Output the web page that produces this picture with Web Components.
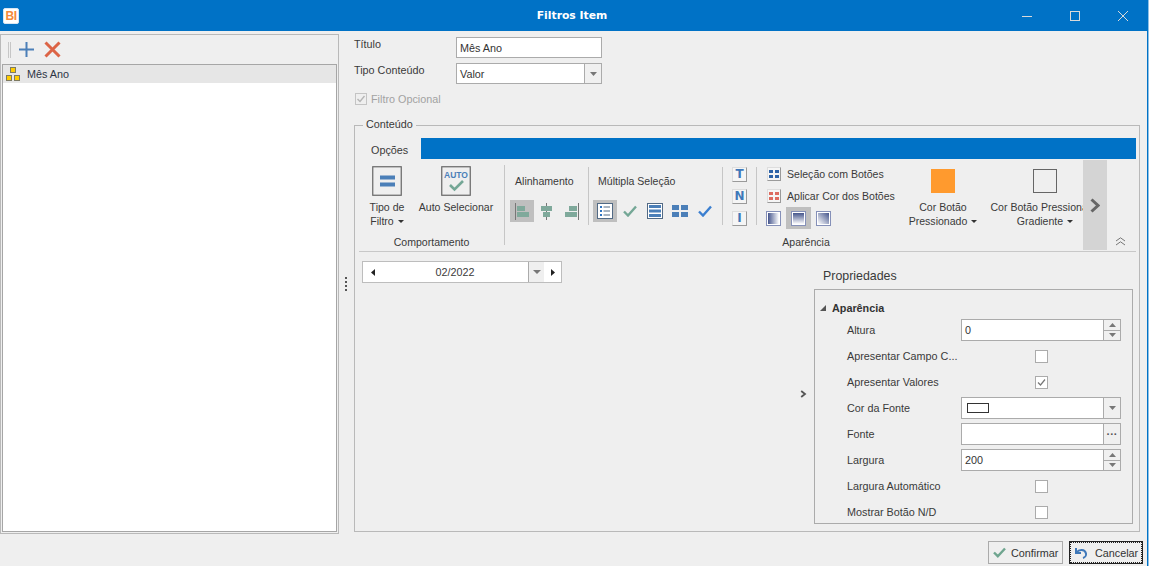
<!DOCTYPE html>
<html lang="pt">
<head>
<meta charset="utf-8">
<title>Filtros Item</title>
<style>
  html, body { margin: 0; height: 100%; overflow: hidden; }
  body { font: 10.8px/14px "Liberation Sans", sans-serif; color: #3a3a3a; background: #efefef; }
</style>
</head>
<body>
<filter-window>
  <title-bar slot="top" caption="Filtros Item"></title-bar>
  <item-list slot="left">
    <list-row>Mês Ano</list-row>
  </item-list>
  <div slot="right">
    <form-row label="Título"><text-box value="Mês Ano" h="21"></text-box></form-row>
    <form-row label="Tipo Conteúdo"><text-box value="Valor" btn="drop" h="21"></text-box></form-row>
    <opt-check label="Filtro Opcional"></opt-check>
  </div>
  <group-box slot="group" legend="Conteúdo">
    <ribbon-tabs tab="Opções"></ribbon-tabs>
    <ribbon-bar></ribbon-bar>
    <editor-area></editor-area>
  </group-box>
  <dlg-button slot="footer" kind="ok">Confirmar</dlg-button>
  <dlg-button slot="footer" kind="cancel" focused>Cancelar</dlg-button>
</filter-window>

<script>
class Base extends HTMLElement {
  connectedCallback() {
    if (this.shadowRoot) return;
    this.attachShadow({ mode: 'open' }).innerHTML = `<style>${this.css()}</style>${this.html()}`;
  }
  css() { return ':host{display:block}'; }
  html() { return '<slot></slot>'; }
  attr(name, d = '') { return this.hasAttribute(name) ? this.getAttribute(name) : d; }
}

class FilterWindow extends Base {
  css() { return `
    :host { display: flex; flex-direction: column; width: 1149px; height: 566px; box-sizing: border-box;
      border-right: 1px solid #8fc1e6; position: relative; }
    .inner { flex: 1; display: flex; flex-direction: column; border-right: 1px solid #0072c6; min-height: 0; }
    .main { flex: 1; display: flex; min-height: 0; padding-top: 3px; }
    .left { width: 339px; flex: none; display: flex; }
    .splitter { width: 15px; flex: none; display: flex; align-items: flex-start; justify-content: center; }
    .dots { margin: 243px 0 0 -2px; width: 2px; height: 14px;
      background: repeating-linear-gradient(#555 0 2px, transparent 2px 4px); }
    .right { flex: 1; display: flex; flex-direction: column; padding: 3px 7px 3px 0; min-width: 0; }
    .foot { height: 31px; flex: none; box-sizing: border-box; padding: 6px 4px 0 0; display: flex; justify-content: flex-end; gap: 6px; }
    ::slotted(group-box) { flex: 1; min-height: 0; }
  `; }
  html() { return `
    <slot name="top"></slot>
    <div class="inner">
      <div class="main">
        <div class="left"><slot name="left"></slot></div>
        <div class="splitter"><div class="dots"></div></div>
        <div class="right"><slot name="right"></slot><slot name="group"></slot></div>
      </div>
      <div class="foot"><slot name="footer"></slot></div>
    </div>`; }
}

class TitleBar extends Base {
  css() { return `
    :host { display: flex; align-items: center; height: 31px; flex: none; background: #0072c6; color: #fff; }
    .logo { width: 16px; height: 16px; margin-left: 3px; background: #fff; border-radius: 2px; box-sizing: border-box;
      border: 1px solid #d8e6f2; color: #f58a3c; font: bold 12px/14px "Liberation Sans", sans-serif; text-align: center; letter-spacing: -.5px; }
    .cap { flex: 1; text-align: center; font: bold 10.8px/14px "DejaVu Sans", sans-serif; padding-left: 122px; }
    .ctl { display: flex; margin-right: 1px; }
    .ctl div { width: 48px; height: 31px; display: flex; align-items: center; justify-content: center; }
    svg { display: block; }
  `; }
  html() { return `
    <div class="logo">BI</div>
    <div class="cap">${this.attr('caption')}</div>
    <div class="ctl">
      <div><svg width="10" height="10"><path d="M0 5.5H10" stroke="#d9d9d9"/></svg></div>
      <div><svg width="10" height="10"><rect x=".5" y=".5" width="9" height="9" fill="none" stroke="#d9d9d9"/></svg></div>
      <div><svg width="10" height="10"><path d="M0 0L10 10M10 0L0 10" stroke="#d9d9d9"/></svg></div>
    </div>`; }
}

class ItemList extends Base {
  css() { return `
    :host { flex: 1; display: flex; flex-direction: column; border: 1px solid #b9b9b9; box-sizing: border-box; margin-bottom: 1px; }
    .tools { height: 29px; flex: none; display: flex; align-items: center; padding-left: 7px; }
    .grip { width: 3px; height: 16px; border-left: 1px solid #c6c6c6; border-right: 1px solid #c6c6c6; box-sizing: border-box; margin-right: 8px; }
    .list { flex: 1; margin: 0 1px 1px 1px; background: #fff; border: 1px solid #a6a6a6; }
    svg { display: block; }
  `; }
  html() { return `
    <div class="tools">
      <div class="grip"></div>
      <svg width="15" height="15" style="margin-right:10px"><path d="M7.5 0V15M0 7.5H15" stroke="#4b7fb8" stroke-width="2"/></svg>
      <svg width="17" height="17"><path d="M1.5 1.5L15.5 15.5M15.5 1.5L1.5 15.5" stroke="#dc6446" stroke-width="3"/></svg>
    </div>
    <div class="list"><slot></slot></div>`; }
}

class ListRow extends Base {
  css() { return `
    :host { display: flex; align-items: center; height: 18px; background: #e6e6e6; color: #2c3444; }
    svg { display: block; margin: 0 6px 0 3px; }
  `; }
  html() { return `
    <svg width="15" height="15" viewBox="0 0 15 15">
      <g fill="#ffcc00" stroke="#7d7a62"><rect x="4.5" y=".5" width="5" height="5"/><rect x=".5" y="8.5" width="5" height="5"/><rect x="8.5" y="8.5" width="5" height="5"/></g>
    </svg><slot></slot>`; }
}

class FormRow extends Base {
  css() { return `
    :host { display: grid; grid-template-columns: 102px 146px; margin-bottom: 5px; }
  `; }
  html() { return `<div>${this.attr('label')}</div><slot></slot>`; }
}

class TextBox extends Base {
  css() { return `
    :host { display: flex; box-sizing: border-box; height: ${this.attr('h', '22')}px; border: 1px solid #ababab; background: #fff; color: #333; }
    .val { flex: 1; padding-left: 3px; display: flex; align-items: center; min-width: 0; }
    .b { flex: none; width: 16px; border-left: 1px solid #ababab; display: flex; flex-direction: column; align-items: center; justify-content: center; background: #f0f0f0; }
    .b i { flex: 1; align-self: stretch; display: flex; align-items: center; justify-content: center; }
    .b i + i { border-top: 1px solid #ababab; }
    .dots { font: bold 11px/8px "Liberation Sans", sans-serif; color: #555; }
    svg { display: block; }
    .swatch { width: 20px; height: 8px; border: 1px solid #333; background: #fff; margin-left: 2px; }
  `; }
  html() {
    const down = '<svg width="7" height="4"><path d="M0 0H7L3.5 4Z" fill="#777"/></svg>';
    const up = '<svg width="7" height="4"><path d="M0 4H7L3.5 0Z" fill="#777"/></svg>';
    const btn = {
      drop: `<div class="b">${down}</div>`,
      spin: `<div class="b"><i>${up}</i><i>${down}</i></div>`,
      more: `<div class="b"><span class="dots">···</span></div>`
    }[this.attr('btn')] || '';
    const val = this.hasAttribute('swatch') ? '<div class="swatch"></div>' : this.attr('value');
    return `<div class="val">${val}</div>${btn}`;
  }
}

class OptCheck extends Base {
  css() { return `
    :host { display: flex; align-items: center; height: 14px; margin: 8px 0 12px 1px; color: #a2a2a2; }
    svg { display: block; margin-right: 4px; }
  `; }
  html() { return `
    <svg width="12" height="12"><rect x=".5" y=".5" width="11" height="11" fill="#efefef" stroke="#c4c4c4"/><path d="M2.5 6L5 8.5L9.5 3" fill="none" stroke="#b5b5b5" stroke-width="1.4"/></svg>
    ${this.attr('label')}`; }
}

class GroupBox extends Base {
  css() { return `
    :host { display: flex; }
    fieldset { flex: 1; display: flex; flex-direction: column; margin: 0; min-width: 0; box-sizing: border-box;
      border: 1px solid #b9b9b9; padding: 6px 3px 0 4px; }
    legend { margin-left: 4px; padding: 0 3px; line-height: 14px; position: relative; top: -1px; }
  `; }
  html() { return `<fieldset><legend>${this.attr('legend')}</legend><slot></slot></fieldset>`; }
}

class RibbonTabs extends Base {
  css() { return `
    :host { display: flex; height: 21px; flex: none; }
    .t { width: 62px; box-sizing: border-box; padding: 5px 0 0 12px; }
    .fill { flex: 1; background: #0072c6; }
  `; }
  html() { return `<div class="t">${this.attr('tab')}</div><div class="fill"></div>`; }
}

class RibbonGroup extends Base {
  css() { return `
    :host { display: flex; flex-direction: column; flex: none; width: ${this.attr('w')}px; box-sizing: border-box; position: relative; }
    .body { height: 75px; display: flex; align-items: flex-start; }
    .lab { text-align: center; line-height: 14px; }
  `; }
  html() { return `<div class="body"><slot></slot></div><div class="lab">${this.attr('label')}</div>`; }
}

class LargeButton extends Base {
  css() { return `
    :host { display: flex; flex-direction: column; align-items: center; flex: none; width: ${this.attr('w')}px; margin: 6px 0 0 ${this.attr('ml', '0')}px; text-align: center; white-space: nowrap; }
    .ic { height: 30px; display: flex; align-items: center; justify-content: center; margin-bottom: 4px; }
    .caret { display: inline-block; width: 0; height: 0; border: 3px solid transparent; border-top: 3px solid #333; border-bottom: 0; margin: 0 0 2px 4px; }
  `; }
  html() {
    const lines = this.attr('text').split('|');
    const caret = this.hasAttribute('caret') ? '<span class="caret"></span>' : '';
    return `<div class="ic"><slot></slot></div><div>${lines.join('<br>')}${caret}</div>`;
  }
}

class IconCell extends Base {
  css() { return `
    :host { display: flex; align-items: center; justify-content: center; flex: none; width: ${this.attr('w', '24')}px; height: 22px; ${this.hasAttribute('on') ? 'background:#bfbfbf;' : ''} }
    ::slotted(svg) { display: block; }
  `; }
}

class FlatKey extends Base {
  css() { return `
    :host { display: flex; align-items: center; justify-content: center; width: 15px; height: 15px; box-sizing: border-box;
      background: #f5f5f5; border-right: 1px solid #9a9a9a; border-bottom: 1px solid #9a9a9a; border-top: 1px solid #ddd; border-left: 1px solid #ddd;
      font: bold 12px/13px "DejaVu Sans", sans-serif; color: #3f78b9; }
    ::slotted(svg) { display: block; }
  `; }
}

class RibbonBar extends Base {
  css() { return `
    :host { display: flex; height: 93px; flex: none; box-sizing: border-box; padding-top: 1px; border-bottom: 1px solid #c8c8c8; font-size: 10.55px; }
    .clip { width: 724px; flex: none; overflow: hidden; display: flex; }
    .sep { flex: none; width: 1px; background: #c6c6c6; height: 58px; margin-top: 7px; }
    .tall { height: 80px; margin-top: 5px; }
    .sec { flex: none; padding-left: 5px; }
    .ttl { padding: 14px 0 0 5px; height: 14px; box-sizing: content-box; margin-bottom: 12px; }
    .icons { display: flex; }
    .scroll { width: 24px; flex: none; height: 90px; background: #d4d4d4; display: flex; align-items: center; justify-content: center; }
    .coll { flex: 1; display: flex; align-items: flex-end; justify-content: flex-end; padding: 0 10px 5px 0; }
    .keys { flex: none; display: flex; flex-direction: column; gap: 7px; padding: 7px 9px 0 9px; }
    .col { flex: none; width: 147px; box-sizing: border-box; padding: 3px 0 0 5px; white-space: nowrap; }
    .line { display: flex; align-items: center; height: 22px; padding-left: 5px; }
    .line flat-key { width: 14px; height: 14px; margin-right: 6px; }
    .grads { display: flex; margin-left: -1px; }
    svg { display: block; }
    .sw { width: 24px; height: 24px; box-sizing: border-box; }
  `; }
  html() {
    const grad = (id, a, b, c, d) => `<svg width="15" height="15"><defs><linearGradient id="${id}" x1="${a}" y1="${b}" x2="${c}" y2="${d}"><stop offset="0" stop-color="#45558c"/><stop offset="1" stop-color="#fff"/></linearGradient></defs><rect x=".5" y=".5" width="14" height="14" fill="#fff" stroke="#8590b8"/><rect x="2" y="2" width="11" height="11" fill="url(#${id})"/></svg>`;
    return `
    <div class="clip">
      <ribbon-group w="145" label="Comportamento">
        <large-button w="38" ml="9" text="Tipo de|Filtro" caret>
          <svg width="30" height="30"><rect x=".75" y=".75" width="28.5" height="28.5" fill="none" stroke="#666" stroke-width="1.2"/><path d="M8 11.5H23M8 18.5H23" stroke="#4b7fb8" stroke-width="4"/></svg>
        </large-button>
        <large-button w="78" ml="11" text="Auto Selecionar">
          <svg width="30" height="30"><rect x=".75" y=".75" width="28.5" height="28.5" fill="none" stroke="#666" stroke-width="1.2"/><text x="15" y="11.5" text-anchor="middle" font-family="Liberation Sans" font-weight="bold" font-size="8.5" fill="#4b7fb8">AUTO</text><path d="M9 19L13.5 23.5L22 15" fill="none" stroke="#74a796" stroke-width="2.6"/></svg>
        </large-button>
      </ribbon-group>
      <ribbon-group w="604" label="Aparência">
        <div class="sep tall" style="margin-right:0"></div>
        <div class="sec" style="width:78px">
          <div class="ttl">Alinhamento</div>
          <div class="icons">
            <icon-cell on><svg width="24" height="22"><path d="M5.5 3V20" stroke="#777"/><path d="M7 6H15V11H7ZM7 12H19V17H7Z" fill="#7fa99b"/></svg></icon-cell>
            <icon-cell><svg width="24" height="22"><path d="M12.5 3V20" stroke="#777"/><path d="M7 6H18V11H7ZM9 12H16V17H9Z" fill="#7fa99b"/></svg></icon-cell>
            <icon-cell><svg width="24" height="22"><path d="M20.5 3V20" stroke="#777"/><path d="M11 6H19V11H11ZM7 12H19V17H7Z" fill="#7fa99b"/></svg></icon-cell>
          </div>
        </div>
        <div class="sep"></div>
        <div class="sec" style="width:129px;padding-left:4px">
          <div class="ttl">Múltipla Seleção</div>
          <div class="icons">
            <icon-cell on><svg width="16" height="16"><rect x=".5" y=".5" width="15" height="15" fill="#fff" stroke="#526a85"/><path d="M3 4H5M3 8H5M3 12H5" stroke="#2f74c0" stroke-width="2"/><path d="M6.5 4H13M6.5 8H13M6.5 12H13" stroke="#526a85"/></svg></icon-cell>
            <icon-cell w="25"><svg width="14" height="12"><path d="M1 6.5L5 10.5L13 1.5" fill="none" stroke="#74a796" stroke-width="2.4"/></svg></icon-cell>
            <icon-cell w="25"><svg width="16" height="16"><rect x=".5" y=".5" width="15" height="15" fill="#fff" stroke="#526a85"/><path d="M2 2H14V5H2ZM2 6.5H14V9.5H2ZM2 11H14V14H2Z" fill="#4b7fb8"/></svg></icon-cell>
            <icon-cell w="25"><svg width="16" height="12"><path d="M0 0H7V5H0ZM9 0H16V5H9ZM0 7H7V12H0ZM9 7H16V12H9Z" fill="#4b7fb8"/></svg></icon-cell>
            <icon-cell w="25"><svg width="14" height="12"><path d="M1 6.5L5 10.5L13 1.5" fill="none" stroke="#3b7fd0" stroke-width="2.4"/></svg></icon-cell>
          </div>
        </div>
        <div class="sep"></div>
        <div class="keys">
          <flat-key>T</flat-key>
          <flat-key>N</flat-key>
          <flat-key>I</flat-key>
        </div>
        <div class="sep"></div>
        <div class="col">
          <div class="line"><flat-key><svg width="10" height="8"><path d="M0 0H4V3H0ZM6 0H10V3H6ZM0 5H4V8H0ZM6 5H10V8H6Z" fill="#2f64a8"/></svg></flat-key>Seleção com Botões</div>
          <div class="line"><flat-key><svg width="10" height="8"><path d="M0 0H4V3H0ZM6 0H10V3H6ZM0 5H4V8H0ZM6 5H10V8H6Z" fill="#dd6b60"/></svg></flat-key>Aplicar Cor dos Botões</div>
          <div class="grads">
            <icon-cell w="25">${grad('g1', 0, 0, 1, 0)}</icon-cell>
            <icon-cell w="25" on>${grad('g2', 0, 0, 0, 1)}</icon-cell>
            <icon-cell w="25">${grad('g3', 1, 0, 0, 1)}</icon-cell>
          </div>
        </div>
        <large-button w="78" text="Cor Botão|Pressionado" caret>
          <div class="sw" style="background:#ff9a2e"></div>
        </large-button>
        <large-button w="110" ml="8" text="Cor Botão Pressionado|Gradiente" caret>
          <div class="sw" style="border:1px solid #666"></div>
        </large-button>
      </ribbon-group>
    </div>
    <div class="scroll"><svg width="10" height="15"><path d="M1.5 1.5L8 7.5L1.5 13.5" fill="none" stroke="#666" stroke-width="3"/></svg></div>
    <div class="coll"><svg width="11" height="9"><path d="M1 4L5.5 .8L10 4M1 8L5.5 4.8L10 8" fill="none" stroke="#777"/></svg></div>`;
  }
}

class DateNav extends Base {
  css() { return `
    :host { display: flex; width: 200px; height: 22px; box-sizing: border-box; border: 1px solid #bdbdbd; background: #fff; flex: none; }
    .l { width: 19px; display: flex; align-items: center; justify-content: center; }
    .v { flex: 1; text-align: center; line-height: 20px; border-right: 1px solid #ababab; }
    .d { width: 15px; background: #efefef; display: flex; align-items: center; justify-content: center; }
    .r { width: 17px; display: flex; align-items: center; justify-content: center; }
    svg { display: block; }
  `; }
  html() { return `
    <div class="l"><svg width="4" height="7"><path d="M4 0V7L0 3.5Z" fill="#222"/></svg></div>
    <div class="v">${this.attr('value')}</div>
    <div class="d"><svg width="8" height="4"><path d="M0 0H8L4 4Z" fill="#777"/></svg></div>
    <div class="r"><svg width="4" height="7"><path d="M0 0V7L4 3.5Z" fill="#222"/></svg></div>`; }
}

class PropRow extends Base {
  css() { return `
    :host { display: grid; grid-template-columns: 114px 160px; align-items: center; height: 26px; padding-left: 32px; }
    .lab { white-space: nowrap; }
    .chk { display: flex; justify-content: center; }
    svg { display: block; }
  `; }
  html() {
    const check = this.hasAttribute('check')
      ? `<div class="chk"><svg width="13" height="13"><rect x=".5" y=".5" width="12" height="12" fill="#fff" stroke="#ababab"/>${this.attr('check') === 'on' ? '<path d="M3 6.5L5.5 9L10 3.5" fill="none" stroke="#777" stroke-width="1.2"/>' : ''}</svg></div>`
      : '<slot></slot>';
    return `<div class="lab">${this.attr('label')}</div>${check}`;
  }
}

class PropGrid extends Base {
  css() { return `
    :host { display: block; width: 319px; height: 235px; box-sizing: border-box; border: 1px solid #ababab; overflow: hidden; padding-top: 9px; }
    .hd { display: flex; align-items: center; height: 18px; padding-left: 5px; font-weight: 700; color: #333; box-sizing: border-box; padding-bottom: 1px; }
    svg { display: block; margin-right: 6px; }
  `; }
  html() { return `
    <div class="hd"><svg width="6" height="6"><path d="M6 0V6H0Z" fill="#555"/></svg>${this.attr('section')}</div>
    <slot></slot>`; }
}

class EditorArea extends Base {
  css() { return `
    :host { flex: 1; display: flex; min-height: 0; }
    .l { flex: 1; padding: 9px 0 0 3px; }
    .mid { flex: none; width: 10px; margin-right: 4px; align-self: center; padding-top: 4px; }
    .r { flex: none; width: 322px; display: flex; flex-direction: column; }
    .ttl { padding: 17px 0 6px 9px; font-size: 12.4px; line-height: 14px; }
    svg { display: block; }
  `; }
  html() { return `
    <div class="l"><date-nav value="02/2022"></date-nav></div>
    <div class="mid"><svg width="7" height="8"><path d="M1.2 1L5 4L1.2 7" fill="none" stroke="#555" stroke-width="1.8"/></svg></div>
    <div class="r">
      <div class="ttl">Propriedades</div>
      <prop-grid section="Aparência">
        <prop-row label="Altura"><text-box value="0" btn="spin"></text-box></prop-row>
        <prop-row label="Apresentar Campo C..." check></prop-row>
        <prop-row label="Apresentar Valores" check="on"></prop-row>
        <prop-row label="Cor da Fonte"><text-box swatch btn="drop"></text-box></prop-row>
        <prop-row label="Fonte"><text-box btn="more"></text-box></prop-row>
        <prop-row label="Largura"><text-box value="200" btn="spin"></text-box></prop-row>
        <prop-row label="Largura Automático" check></prop-row>
        <prop-row label="Mostrar Botão N/D" check></prop-row>
      </prop-grid>
    </div>`; }
}

class DlgButton extends Base {
  css() {
    const f = this.hasAttribute('focused');
    return `
    :host { display: flex; align-items: center; height: 23px; width: ${f ? 74 : 75}px; box-sizing: border-box;
      border: 1px solid ${f ? '#222' : '#ababab'}; ${f ? 'outline: 1px dotted #222; outline-offset: -2px;' : ''} padding-left: 4px; gap: ${f ? 7 : 5}px; color: #333; white-space: nowrap; }
    svg { display: block; flex: none; }
  `;
  }
  html() {
    const ic = this.attr('kind') === 'ok'
      ? '<svg width="13" height="11"><path d="M1 5.5L4.8 9.2L12 1.5" fill="none" stroke="#6fa58f" stroke-width="2.4"/></svg>'
      : '<svg width="14" height="12"><path d="M2 1V6H7" fill="none" stroke="#3f78b9" stroke-width="2"/><path d="M2.5 5.5C5 2 11 2 12 6.5C12.4 8.5 11 10.5 9 11" fill="none" stroke="#3f78b9" stroke-width="2"/></svg>';
    return `${ic}<slot></slot>`;
  }
}

customElements.define('title-bar', TitleBar);
customElements.define('item-list', ItemList);
customElements.define('list-row', ListRow);
customElements.define('form-row', FormRow);
customElements.define('text-box', TextBox);
customElements.define('opt-check', OptCheck);
customElements.define('group-box', GroupBox);
customElements.define('ribbon-tabs', RibbonTabs);
customElements.define('ribbon-group', RibbonGroup);
customElements.define('large-button', LargeButton);
customElements.define('icon-cell', IconCell);
customElements.define('flat-key', FlatKey);
customElements.define('ribbon-bar', RibbonBar);
customElements.define('date-nav', DateNav);
customElements.define('prop-row', PropRow);
customElements.define('prop-grid', PropGrid);
customElements.define('editor-area', EditorArea);
customElements.define('dlg-button', DlgButton);
customElements.define('filter-window', FilterWindow);
</script>
</body>
</html>
